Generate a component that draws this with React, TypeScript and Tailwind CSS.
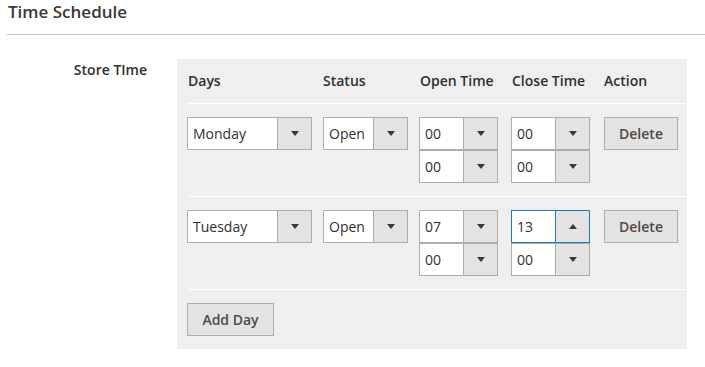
import React from "react";

type SelectProps = {
  value: string;
  width: string;
  focused?: boolean;
};

function Select({ value, width, focused }: SelectProps) {
  return (
    <div
      className={`flex h-[33px] bg-white border ${width} ${
        focused ? "border-[#1979c3]" : "border-[#adadad]"
      }`}
    >
      <div className="flex-1 flex items-center pl-[5px] text-[14px] text-[#303030]">
        {value}
      </div>
      <div
        className={`w-[34px] flex items-center justify-center bg-[#e3e3e3] border-l ${
          focused ? "border-[#1979c3]" : "border-[#adadad]"
        }`}
      >
        {focused ? (
          <span className="w-0 h-0 border-x-[4px] border-x-transparent border-b-[5px] border-b-[#41362f]" />
        ) : (
          <span className="w-0 h-0 border-x-[4px] border-x-transparent border-t-[5px] border-t-[#41362f]" />
        )}
      </div>
    </div>
  );
}

function Button({ label, width }: { label: string; width: string }) {
  return (
    <button
      className={`h-[33px] ${width} bg-[#e3e3e3] border border-[#adadad] text-[14px] font-semibold text-[#514943]`}
    >
      {label}
    </button>
  );
}

const rows = [
  { day: "Monday", status: "Open", open: ["00", "00"], close: ["00", "00"] },
  { day: "Tuesday", status: "Open", open: ["07", "00"], close: ["13", "00"], focus: true },
];

function App() {
  return (
    <div className="min-h-screen bg-white font-['Open_Sans',sans-serif] text-[#303030]">
      <div className="ml-[7px] pt-[1px] pb-[11px] border-b border-[#cac3b4]">
        <div className="pl-[1px] text-[17px] leading-[22px] font-semibold text-[#41362f]">
          Time Schedule
        </div>
      </div>

      <div className="flex mt-[24px]">
        <div className="w-[177px] pr-[30px] pt-[1px] text-right text-[14px] leading-5 font-semibold text-[#303030]">
          Store TIme
        </div>

        <div className="w-[510px] bg-[#efefef] pl-[10px]">
          <div className="flex h-[45px] items-center border-b border-white text-[14px] font-semibold leading-5">
            <div className="w-[136px] pl-px">Days</div>
            <div className="w-[96px]">Status</div>
            <div className="w-[92px] pl-px">Open Time</div>
            <div className="w-[93px] pl-px">Close Time</div>
            <div>Action</div>
          </div>

          {rows.map((r) => (
            <div key={r.day} className="flex py-[13px] border-b border-white">
              <div className="w-[136px]">
                <Select value={r.day} width="w-[125px]" />
              </div>
              <div className="w-[96px]">
                <Select value={r.status} width="w-[85px]" />
              </div>
              <div className="w-[92px] flex flex-col">
                <Select value={r.open[0]} width="w-[79px]" />
                <Select value={r.open[1]} width="w-[79px]" />
              </div>
              <div className="w-[93px] flex flex-col">
                <Select value={r.close[0]} width="w-[79px]" focused={r.focus} />
                <Select value={r.close[1]} width="w-[79px]" />
              </div>
              <div>
                <Button label="Delete" width="w-[74px]" />
              </div>
            </div>
          ))}

          <div className="py-[13px]">
            <Button label="Add Day" width="w-[87px]" />
          </div>
        </div>
      </div>
    </div>
  );
}

export default App;
